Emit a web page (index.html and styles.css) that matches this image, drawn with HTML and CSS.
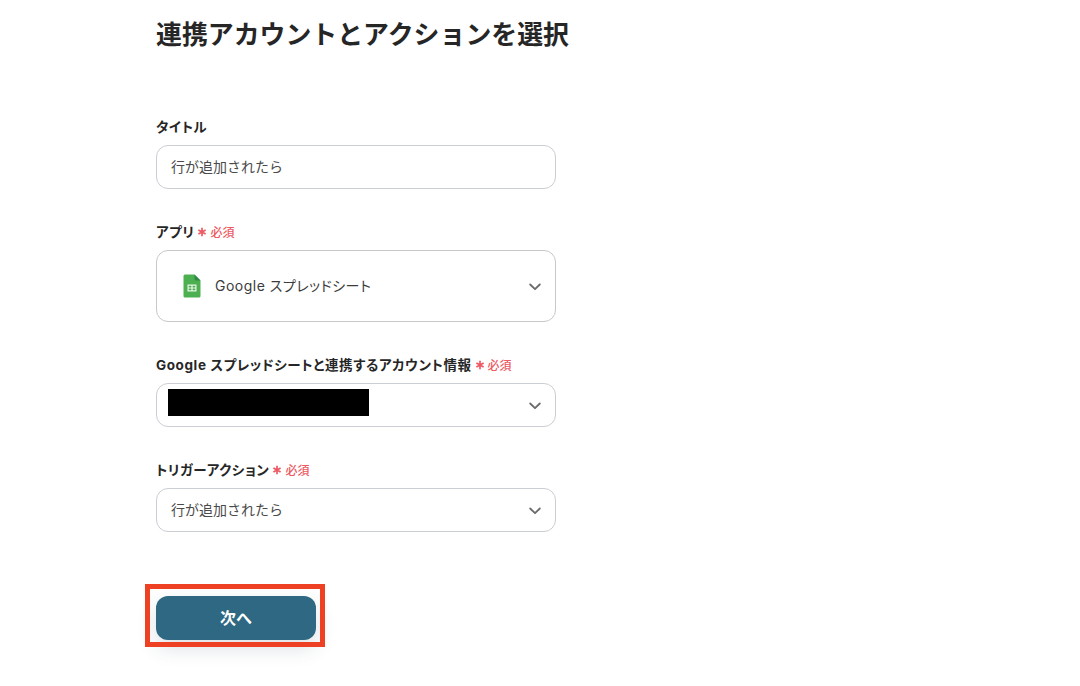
FILE: index.html
```html
<!DOCTYPE html>
<html lang="ja">
<head>
  <meta charset="UTF-8">
  <title>連携アカウントとアクションを選択</title>
  <link rel="stylesheet" href="styles.css">
</head>
<body>

<main class="page">
  <h1>連携アカウントとアクションを選択</h1>

  <div class="field field-first">
    <div class="field-label">タイトル</div>
    <div class="box"><span class="box-value">行が追加されたら</span></div>
  </div>

  <div class="field">
    <div class="field-label">アプリ <span class="required"><svg class="star" viewBox="0 0 10 10" width="10" height="10"><path d="M5 .8V9.2M1.4 2.9L8.6 7.1M8.6 2.9L1.4 7.1" stroke="#ec5a63" stroke-width="1.7" fill="none"/></svg>必須</span></div>
    <div class="box box-tall">
      <svg class="sheet-icon" viewBox="0 0 18 24" width="18" height="24">
        <path d="M2 0.5H11.5L17.5 6.5V22a1.5 1.5 0 0 1-1.5 1.5H2A1.5 1.5 0 0 1 .5 22V2A1.5 1.5 0 0 1 2 .5Z" fill="#4caf50"/>
        <path d="M11.5 0.5L17.5 6.5H13a1.5 1.5 0 0 1-1.5-1.5Z" fill="#2e8b47"/>
        <path d="M4.5 10.5h9v7h-9Zm1.2 1.2v1.7h2.7v-1.7Zm3.9 0v1.7h2.7v-1.7Zm-3.9 2.9v1.7h2.7v-1.7Zm3.9 0v1.7h2.7v-1.7Z" fill="#e8f5e9" fill-rule="evenodd"/>
      </svg>
      <span class="box-value box-text">Google スプレッドシート</span>
      <svg class="chevron" viewBox="0 0 12 8" width="12" height="8"><path d="M1.2 1.5L6 6.2L10.8 1.5" fill="none" stroke="#6b6b6b" stroke-width="1.8" stroke-linecap="round" stroke-linejoin="round"/></svg>
    </div>
  </div>

  <div class="field">
    <div class="field-label">Google スプレッドシートと連携するアカウント情報 <span class="required"><svg class="star" viewBox="0 0 10 10" width="10" height="10"><path d="M5 .8V9.2M1.4 2.9L8.6 7.1M8.6 2.9L1.4 7.1" stroke="#ec5a63" stroke-width="1.7" fill="none"/></svg>必須</span></div>
    <div class="box box-account">
      <div class="redacted"></div>
      <svg class="chevron" viewBox="0 0 12 8" width="12" height="8"><path d="M1.2 1.5L6 6.2L10.8 1.5" fill="none" stroke="#6b6b6b" stroke-width="1.8" stroke-linecap="round" stroke-linejoin="round"/></svg>
    </div>
  </div>

  <div class="field">
    <div class="field-label">トリガーアクション <span class="required"><svg class="star" viewBox="0 0 10 10" width="10" height="10"><path d="M5 .8V9.2M1.4 2.9L8.6 7.1M8.6 2.9L1.4 7.1" stroke="#ec5a63" stroke-width="1.7" fill="none"/></svg>必須</span></div>
    <div class="box">
      <span class="box-value">行が追加されたら</span>
      <svg class="chevron" viewBox="0 0 12 8" width="12" height="8"><path d="M1.2 1.5L6 6.2L10.8 1.5" fill="none" stroke="#6b6b6b" stroke-width="1.8" stroke-linecap="round" stroke-linejoin="round"/></svg>
    </div>
  </div>

  <div class="actions">
    <button class="next">次へ</button>
    <div class="highlight"></div>
  </div>
</main>

</body>
</html>
```

FILE: styles.css
```css
* {
  box-sizing: border-box;
}

html, body {
  height: 100%;
  overflow: hidden;
}

body {
  margin: 0;
  background-color: #fff;
  color: #262626;
  font-family: Inter, "Noto Sans CJK JP", sans-serif;
}

.page {
  width: 400px;
  margin-left: 156px;
  padding-top: 15px;
}

h1 {
  margin: 0;
  font-size: 25.9px;
  line-height: 40px;
  font-weight: 700;
  white-space: nowrap;
}

.field {
  margin-top: 32px;
}

.field-first {
  margin-top: 61px;
}

.field-label {
  display: flex;
  align-items: center;
  gap: 3px;
  height: 20px;
  font-size: 13.5px;
  font-weight: 700;
  font-feature-settings: "palt";
  letter-spacing: 0.6px;
  white-space: nowrap;
}

.required {
  display: inline-flex;
  align-items: center;
  gap: 3px;
  color: #ec5a63;
  font-size: 12px;
  font-weight: 500;
  letter-spacing: 0;
}

.star {
  margin-top: 2px;
}

.box {
  display: flex;
  align-items: center;
  justify-content: space-between;
  height: 44px;
  margin-top: 9px;
  padding: 0 14px;
  background-color: #fff;
  border: 1px solid #ccced6;
  border-radius: 12px;
  font-size: 14px;
  color: #4a4a4a;
}

.box-value {
  padding-bottom: 2px;
}

.box-tall {
  height: 72px;
  justify-content: flex-start;
  padding-left: 26px;
  border-color: #c8c8c8;
}

.box-text {
  margin-left: 14px;
  font-feature-settings: "palt";
  letter-spacing: 0.5px;
  color: #3c3c3c;
}

.box-tall .chevron {
  margin-left: auto;
}

.box-account {
  padding-left: 11px;
}

.redacted {
  width: 201px;
  height: 27px;
  margin-bottom: 5px;
  background-color: #000;
}

.chevron {
  flex: none;
  margin-top: 1px;
}

.actions {
  position: relative;
  width: 160px;
  margin-top: 64px;
}

.next {
  display: block;
  width: 160px;
  height: 44px;
  padding: 0 0 3px;
  border: none;
  border-radius: 12px;
  background-color: #2f6882;
  color: #fff;
  font-family: inherit;
  font-size: 16px;
  font-weight: 700;
  box-shadow: 0 8px 20px rgba(40, 70, 90, 0.16);
}

.highlight {
  position: absolute;
  top: -12px;
  left: -11px;
  width: 180px;
  height: 63px;
  border: 5px solid #ee4023;
  pointer-events: none;
}
```
